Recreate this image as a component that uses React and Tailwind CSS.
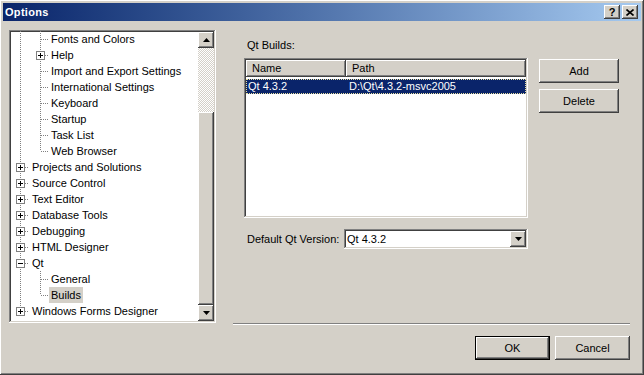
import React from 'react';

// classic 3D bevels
const raised =
  'shadow-[inset_-1px_-1px_#404040,inset_1px_1px_#ffffff,inset_-2px_-2px_#808080,inset_2px_2px_#d4d0c8]';
const sunken =
  'shadow-[inset_-1px_-1px_#ffffff,inset_1px_1px_#808080,inset_-2px_-2px_#d4d0c8,inset_2px_2px_#404040]';

const treeRows = [
  { label: 'Fonts and Colors', level: 2 },
  { label: 'Help', level: 2, box: 'plus' },
  { label: 'Import and Export Settings', level: 2 },
  { label: 'International Settings', level: 2 },
  { label: 'Keyboard', level: 2 },
  { label: 'Startup', level: 2 },
  { label: 'Task List', level: 2 },
  { label: 'Web Browser', level: 2, last: true },
  { label: 'Projects and Solutions', level: 1, box: 'plus' },
  { label: 'Source Control', level: 1, box: 'plus' },
  { label: 'Text Editor', level: 1, box: 'plus' },
  { label: 'Database Tools', level: 1, box: 'plus' },
  { label: 'Debugging', level: 1, box: 'plus' },
  { label: 'HTML Designer', level: 1, box: 'plus' },
  { label: 'Qt', level: 1, box: 'minus' },
  { label: 'General', level: 2 },
  { label: 'Builds', level: 2, last: true, selected: true },
  { label: 'Windows Forms Designer', level: 1, box: 'plus', last: true },
];

const Dots = (props) => (
  <line {...props} stroke="#808080" strokeWidth="1" strokeDasharray="1 1" shapeRendering="crispEdges" />
);

const Expander = ({ cx, type }) => (
  <g shapeRendering="crispEdges">
    <rect x={cx - 4} y={4.5} width="8" height="8" fill="#fff" stroke="#808080" />
    <line x1={cx - 2.5} y1={8.5} x2={cx + 2.5} y2={8.5} stroke="#000" />
    {type === 'plus' && <line x1={cx} y1={6} x2={cx} y2={11} stroke="#000" />}
  </g>
);

const TreeRow = ({ row }) => {
  const w = row.level === 1 ? 19 : 38;
  return (
    <div className="flex h-[16px] items-center">
      <svg width={w} height="16" className="shrink-0">
        {row.level === 1 ? (
          <>
            <Dots x1="9.5" y1="0" x2="9.5" y2={row.last ? 8 : 16} />
            <Dots x1="10" y1="8.5" x2="18" y2="8.5" />
            {row.box && <Expander cx={9.5} type={row.box} />}
          </>
        ) : (
          <>
            <Dots x1="9.5" y1="0" x2="9.5" y2="16" />
            <Dots x1="29.5" y1="0" x2="29.5" y2={row.last ? 8 : 16} />
            <Dots x1="30" y1="8.5" x2="38" y2="8.5" />
            {row.box && <Expander cx={29.5} type={row.box} />}
          </>
        )}
      </svg>
      <span className={`whitespace-nowrap px-[2px] leading-[16px] ${row.selected ? 'bg-[#d4d0c8]' : ''}`}>
        {row.label}
      </span>
    </div>
  );
};

const Arrow = ({ down }) => (
  <svg width="7" height="4" viewBox="0 0 7 4">
    <polygon points={down ? '0,0 7,0 3.5,4' : '0,4 7,4 3.5,0'} fill="#000" />
  </svg>
);

const Button = ({ children, className = '', isDefault }) => (
  <div className={`${isDefault ? 'border border-black' : ''} ${className}`}>
    <div className={`flex h-full w-full items-center justify-center bg-[#d4d0c8] ${raised}`}>{children}</div>
  </div>
);

export default function App() {
  return (
    <div
      className={`flex h-[375px] w-[644px] flex-col bg-[#d4d0c8] p-[3px] text-[11px] text-black ${raised}`}
      style={{ fontFamily: '"Liberation Sans", Arial, sans-serif' }}
    >
      {/* Title bar */}
      <div className="flex h-[18px] shrink-0 items-center justify-between bg-gradient-to-r from-[#0a246a] to-[#a6caf0] pl-[2px] pr-[3px]">
        <span className="text-[11px] font-bold tracking-[0.3px] text-white">Options</span>
        <div className="flex gap-[2px]">
          <div className={`flex h-[14px] w-[16px] items-center justify-center bg-[#d4d0c8] text-[11px] font-bold leading-none ${raised}`}>
            ?
          </div>
          <div className={`flex h-[14px] w-[16px] items-center justify-center bg-[#d4d0c8] ${raised}`}>
            <svg width="8" height="7" viewBox="0 0 8 7">
              <path d="M0.5 0.5 L7.5 6.5 M7.5 0.5 L0.5 6.5" stroke="#000" strokeWidth="1.6" />
            </svg>
          </div>
        </div>
      </div>

      {/* Body */}
      <div className="flex flex-col">
        <div className="flex">
          {/* Tree */}
          <div className={`ml-[6px] mt-[9px] flex h-[293px] w-[207px] bg-white p-[2px] ${sunken}`}>
            <div className="-mt-px flex-1 overflow-hidden">
              {treeRows.map((row) => (
                <TreeRow key={row.label} row={row} />
              ))}
            </div>
            <div className="flex w-[16px] flex-col">
              <div className={`flex h-[16px] items-center justify-center bg-[#d4d0c8] ${raised}`}>
                <Arrow />
              </div>
              <div className="h-[64px] bg-[repeating-conic-gradient(#d4d0c8_0%_25%,#ffffff_0%_50%)] bg-[length:2px_2px]" />
              <div className={`h-[193px] bg-[#d4d0c8] ${raised}`} />
              <div className={`flex h-[16px] items-center justify-center bg-[#d4d0c8] ${raised}`}>
                <Arrow down />
              </div>
            </div>
          </div>

          {/* Right panel */}
          <div className="ml-[17px] w-[397px] pt-[18px]">
            <div className="pl-[14px] leading-[13px]">Qt Builds:</div>
            <div className="mt-[6px] flex pl-[11px]">
              <div className={`h-[160px] w-[284px] bg-white p-[2px] ${sunken}`}>
                <div className="flex h-[17px]">
                  <div className={`flex w-[100px] items-center bg-[#d4d0c8] pl-[6px] ${raised}`}>Name</div>
                  <div className={`flex flex-1 items-center bg-[#d4d0c8] pl-[6px] ${raised}`}>Path</div>
                </div>
                <div className="mt-[2px] flex h-[15px] items-center border border-dotted border-[#e8e0a0] bg-[#0a246a] text-white">
                  <span className="w-[102px] pl-[1px]">Qt 4.3.2</span>
                  <span>D:\Qt\4.3.2-msvc2005</span>
                </div>
              </div>
              <div className="ml-[11px] mt-px flex flex-col gap-[6px]">
                <Button className="h-[24px] w-[80px]">Add</Button>
                <Button className="h-[24px] w-[80px]">Delete</Button>
              </div>
            </div>
            <div className="mt-[11px] flex items-center pl-[11px]">
              <span className="w-[100px] pl-[3px]">Default Qt Version:</span>
              <div className={`flex h-[20px] w-[184px] items-center bg-white p-[2px] ${sunken}`}>
                <span className="flex-1 pl-[1px]">Qt 4.3.2</span>
                <div className={`flex h-[16px] w-[16px] items-center justify-center bg-[#d4d0c8] ${raised}`}>
                  <Arrow down />
                </div>
              </div>
            </div>
          </div>
        </div>

        {/* Separator */}
        <div className="ml-[230px] mr-[11px] h-[2px] border-t border-b border-t-[#808080] border-b-white" />

        {/* Dialog buttons */}
        <div className="mt-[11px] flex justify-end gap-[5px] pr-[11px]">
          <Button isDefault className="h-[24px] w-[75px]">OK</Button>
          <Button className="h-[24px] w-[75px]">Cancel</Button>
        </div>
      </div>
    </div>
  );
}
